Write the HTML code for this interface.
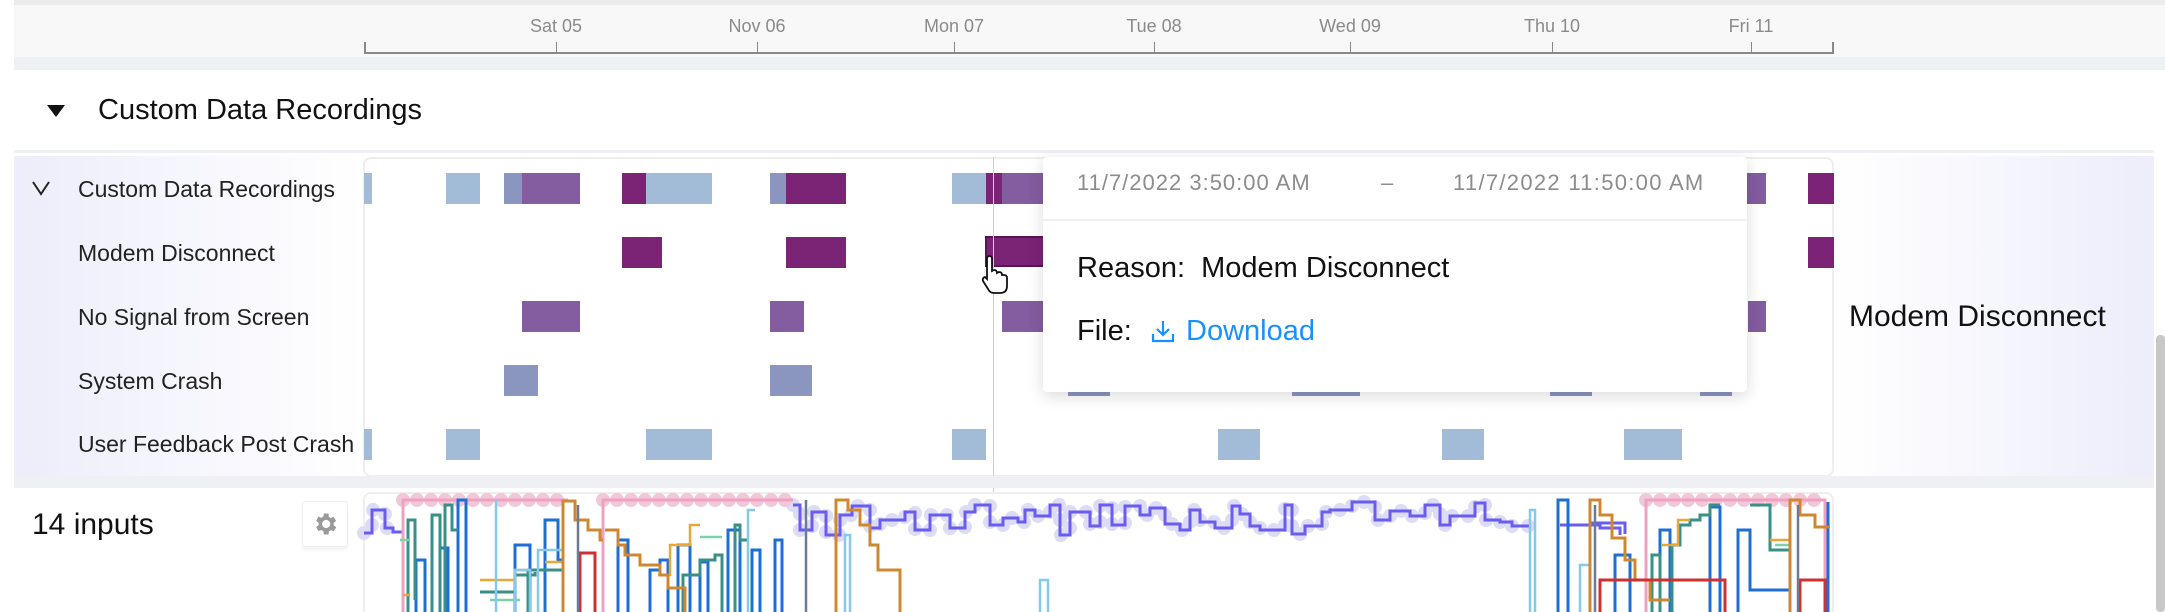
<!DOCTYPE html>
<html style="width:2165px;height:612px;overflow:hidden"><head><meta charset="utf-8"><style>
*{margin:0;padding:0;box-sizing:border-box}
body{width:2165px;height:612px;overflow:hidden;background:#fff;font-family:"Liberation Sans",sans-serif;position:relative}
.a{position:absolute}
.lab{position:absolute;left:78px;font-size:23px;color:#222;line-height:26px}
.bar{position:absolute;height:31px}
.lb{background:#a2bcd8}.gb{background:#8b96c0}.pu{background:#845ca0}.dp{background:#7b2374}
.tk{position:absolute;font-size:18px;color:#8a8a8a;transform:translateX(-50%)}
</style></head><body>
<div class="a" style="left:0;top:0;width:2165px;height:57px;background:#f8f8f8"></div>
<div class="a" style="left:14px;top:0;width:2151px;height:5px;background:#ebebeb"></div>
<div class="a" style="left:0;top:0;width:14px;height:612px;background:#fff"></div>
<div class="a" style="left:364px;top:52px;width:1470px;height:2px;background:#888"></div>
<div class="a" style="left:364px;top:42px;width:2px;height:12px;background:#888"></div>
<div class="a" style="left:1832px;top:42px;width:2px;height:12px;background:#888"></div>
<div class="a" style="left:556px;top:42px;width:1px;height:12px;background:#888"></div>
<div class="a" style="left:757px;top:42px;width:1px;height:12px;background:#888"></div>
<div class="a" style="left:954px;top:42px;width:1px;height:12px;background:#888"></div>
<div class="a" style="left:1154px;top:42px;width:1px;height:12px;background:#888"></div>
<div class="a" style="left:1350px;top:42px;width:1px;height:12px;background:#888"></div>
<div class="a" style="left:1552px;top:42px;width:1px;height:12px;background:#888"></div>
<div class="a" style="left:1751px;top:42px;width:1px;height:12px;background:#888"></div>
<div class="tk" style="left:556px;top:16px">Sat 05</div>
<div class="tk" style="left:757px;top:16px">Nov 06</div>
<div class="tk" style="left:954px;top:16px">Mon 07</div>
<div class="tk" style="left:1154px;top:16px">Tue 08</div>
<div class="tk" style="left:1350px;top:16px">Wed 09</div>
<div class="tk" style="left:1552px;top:16px">Thu 10</div>
<div class="tk" style="left:1751px;top:16px">Fri 11</div>
<div class="a" style="left:14px;top:57px;width:2151px;height:13px;background:#eff0f3"></div>
<div class="a" style="left:14px;top:70px;width:2140px;height:80px;background:#fff"></div>
<div class="a" style="left:47px;top:105px;width:0;height:0;border-left:9px solid transparent;border-right:9px solid transparent;border-top:12px solid #111"></div>
<div class="a" style="left:98px;top:94px;font-size:29px;color:#111">Custom Data Recordings</div>
<div class="a" style="left:14px;top:150px;width:2140px;height:3px;background:#eff0f3"></div>
<div class="a" style="left:14px;top:156px;width:350px;height:320px;background:linear-gradient(90deg,#ededfb,#fff)"></div>
<div class="a" style="left:1834px;top:156px;width:320px;height:320px;background:linear-gradient(90deg,#fff,#ededfb)"></div>
<div class="a" style="left:363px;top:157px;width:1471px;height:320px;border:2px solid #eeeeee;border-radius:8px;background:#fff"></div>
<svg class="a" style="left:32px;top:180px" width="18" height="16" viewBox="0 0 18 16"><path d="M1 2 L9 14 L17 2" fill="none" stroke="#222" stroke-width="2"/></svg>
<div class="lab" style="top:176px">Custom Data Recordings</div>
<div class="lab" style="top:240px">Modem Disconnect</div>
<div class="lab" style="top:304px">No Signal from Screen</div>
<div class="lab" style="top:368px">System Crash</div>
<div class="lab" style="top:431px">User Feedback Post Crash</div>
<div class="bar lb" style="top:173px;left:364px;width:8px"></div>
<div class="bar lb" style="top:173px;left:446px;width:34px"></div>
<div class="bar gb" style="top:173px;left:504px;width:18px"></div>
<div class="bar pu" style="top:173px;left:522px;width:58px"></div>
<div class="bar dp" style="top:173px;left:622px;width:24px"></div>
<div class="bar lb" style="top:173px;left:646px;width:66px"></div>
<div class="bar gb" style="top:173px;left:770px;width:16px"></div>
<div class="bar dp" style="top:173px;left:786px;width:60px"></div>
<div class="bar lb" style="top:173px;left:952px;width:34px"></div>
<div class="bar dp" style="top:173px;left:986px;width:16px"></div>
<div class="bar pu" style="top:173px;left:1002px;width:764px"></div>
<div class="bar dp" style="top:173px;left:1808px;width:26px"></div>
<div class="bar dp" style="top:237px;left:622px;width:40px"></div>
<div class="bar dp" style="top:237px;left:786px;width:60px"></div>
<div class="bar dp" style="top:236px;left:985px;width:60px;border:2px solid #5a1455"></div>
<div class="bar dp" style="top:237px;left:1808px;width:26px"></div>
<div class="bar pu" style="top:301px;left:522px;width:58px"></div>
<div class="bar pu" style="top:301px;left:770px;width:34px"></div>
<div class="bar pu" style="top:301px;left:1002px;width:50px"></div>
<div class="bar pu" style="top:301px;left:1748px;width:18px"></div>
<div class="bar gb" style="top:365px;left:504px;width:34px"></div>
<div class="bar gb" style="top:365px;left:770px;width:42px"></div>
<div class="bar gb" style="top:365px;left:1068px;width:42px"></div>
<div class="bar gb" style="top:365px;left:1292px;width:68px"></div>
<div class="bar gb" style="top:365px;left:1550px;width:42px"></div>
<div class="bar gb" style="top:365px;left:1700px;width:32px"></div>
<div class="bar lb" style="top:429px;left:364px;width:8px"></div>
<div class="bar lb" style="top:429px;left:446px;width:34px"></div>
<div class="bar lb" style="top:429px;left:646px;width:66px"></div>
<div class="bar lb" style="top:429px;left:952px;width:34px"></div>
<div class="bar lb" style="top:429px;left:1218px;width:42px"></div>
<div class="bar lb" style="top:429px;left:1442px;width:42px"></div>
<div class="bar lb" style="top:429px;left:1624px;width:58px"></div>
<div class="a" style="left:993px;top:157px;width:1px;height:455px;background:#cfcfcf"></div>
<div class="a" style="left:1849px;top:300px;font-size:30px;color:#111">Modem Disconnect</div>
<svg class="a" style="left:980px;top:255px" width="30" height="40" viewBox="0 0 30 40"><path d="M7 4 Q7 1 9.5 1 Q12 1 12 4 L12 16 L14 15 Q17 15 17 18 L19 17 Q22 17 22 20 L24 20 Q27 20 27 23 L27 31 Q27 38 20 38 L14 38 Q10 38 8 34 L3 26 Q2 23 5 22 L7 24 Z" fill="#fff" stroke="#111" stroke-width="1.8"/></svg>
<div class="a" style="left:1043px;top:157px;width:704px;height:235px;background:#fff;border-radius:4px;box-shadow:0 4px 16px rgba(0,0,0,.15)"></div>
<div class="a" style="left:1043px;top:219px;width:704px;height:2px;background:#f0f0f0"></div>
<div class="a" style="left:1077px;top:170px;font-size:22px;letter-spacing:1px;color:#8c8c8c">11/7/2022 3:50:00 AM</div>
<div class="a" style="left:1381px;top:170px;font-size:22px;color:#8c8c8c">–</div>
<div class="a" style="left:1453px;top:170px;font-size:22px;letter-spacing:1.3px;color:#8c8c8c">11/7/2022 11:50:00 AM</div>
<div class="a" style="left:1077px;top:252px;font-size:29px;color:#111">Reason:&nbsp; Modem Disconnect</div>
<div class="a" style="left:1077px;top:315px;font-size:29px;color:#111">File:</div>
<svg class="a" style="left:1150px;top:318px" width="26" height="26" viewBox="0 0 26 26"><path d="M13 3 V17 M7 11 L13 17 L19 11 M3 16 V23 H23 V16" fill="none" stroke="#1890ff" stroke-width="2.2"/></svg>
<div class="a" style="left:1186px;top:315px;font-size:29px;color:#1890ff">Download</div>
<div class="a" style="left:2154px;top:70px;width:11px;height:542px;background:#fff"></div>
<div class="a" style="left:2156px;top:335px;width:9px;height:277px;background:#c8c8c8;border-radius:4px"></div>
<div class="a" style="left:14px;top:476px;width:2140px;height:12px;background:#eff0f3"></div>
<div class="a" style="left:32px;top:508px;font-size:30px;color:#111">14 inputs</div>
<div class="a" style="left:302px;top:501px;width:46px;height:46px;border:1px solid #eee;border-radius:3px;background:#fff;box-shadow:0 3px 3px rgba(0,0,0,.05)"></div>
<svg class="a" style="left:311px;top:510px" width="28" height="28" viewBox="0 0 24 24"><path fill="#9a9a9a" d="M19.4 13a7.5 7.5 0 0 0 0-2l2.1-1.6-2-3.5-2.5 1a7 7 0 0 0-1.7-1L15 3h-4l-.4 2.7a7 7 0 0 0-1.7 1l-2.5-1-2 3.5L6.6 11a7.5 7.5 0 0 0 0 2l-2.2 1.6 2 3.5 2.5-1a7 7 0 0 0 1.7 1L11 21h4l.4-2.7a7 7 0 0 0 1.7-1l2.5 1 2-3.5zM13 15.5a3.5 3.5 0 1 1 0-7 3.5 3.5 0 0 1 0 7z"/></svg>
<div class="a" style="left:363px;top:492px;width:1471px;height:120px;border:2px solid #eeeeee;border-bottom:none;border-radius:8px 8px 0 0;background:#fff"></div>
<svg class="a" style="left:0;top:0" width="2165" height="612" fill="none" stroke-width="3">
<g stroke="#dcdcf5" stroke-width="14" stroke-linecap="round" stroke-dasharray="0 16">
<path d="M364 533 H372 V510 H385 V528 H400"/>
<path d="M793 505 H800 V530 H812 V512 H826 V535 H840 V515 H852 V506 H870 V528 H880 V520 H905 V512 H915 V530 H930 V515 H950 V528 H965 V512 H975 V505 H990 V525 H1003 V518 H1018 V522 H1025 V510 H1035 V516 H1050 V505 H1060 V535 H1070 V512 H1090 V526 H1100 V505 H1112 V525 H1125 V506 H1140 V515 H1150 V508 H1165 V524 H1180 V530 H1190 V510 H1200 V522 H1215 V528 H1232 V506 H1240 V514 H1250 V526 H1260 V530 H1285 V505 H1292 V534 H1305 V526 H1322 V512 H1330 V510 H1352 V502 H1375 V520 H1390 V511 H1410 V516 H1425 V505 H1440 V525 H1450 V516 H1475 V503 H1485 V520 H1500 V522 H1512 V526 H1530"/>
</g>
<g stroke="#f0c8d8" stroke-width="14" stroke-linecap="round" stroke-dasharray="0 14">
<path d="M403 500 H568 M603 500 H793 M1646 500 H1825"/>
</g>
<path stroke="#6a5cf0" d="M364 533 H372 V510 H385 V528 H393 V532 H402 M793 505 H800 V530 H812 V512 H826 V535 H840 V515 H852 V506 H870 V528 H880 V520 H905 V512 H915 V530 H930 V515 H950 V528 H965 V512 H975 V505 H990 V525 H1003 V518 H1018 V522 H1025 V510 H1035 V516 H1050 V505 H1060 V535 H1070 V512 H1090 V526 H1100 V505 H1112 V525 H1125 V506 H1140 V515 H1150 V508 H1165 V524 H1180 V530 H1190 V510 H1200 V522 H1215 V528 H1232 V506 H1240 V514 H1250 V526 H1260 V530 H1285 V505 H1292 V534 H1305 V526 H1322 V512 H1330 V510 H1352 V502 H1375 V520 H1390 V511 H1410 V516 H1425 V505 H1440 V525 H1450 V516 H1475 V503 H1485 V520 H1500 V522 H1512 V526 H1530 M1560 525 H1600 V528 H1620 V535 M1590 523 H1625 V534"/>
<path stroke="#f0a0c0" d="M403 612 V500 H568 M603 612 V500 H793 M1646 612 V500 H1825 V612"/>
<g stroke="#1e6fd4">
<path d="M416 612 V560 H425 V612 M440 612 V548 H448 V612 M458 612 V500 H466 V612 M515 612 V545 H530 V612 M545 612 V520 H558 V560 H563 V612 M618 612 V540 H628 V612 M650 612 V570 H660 V560 H668 V612 M678 612 V545 H690 V612 M700 612 V562 H708 V612 M728 612 V530 H740 V612 M752 612 V550 H760 V612 M775 612 V540 H782 V612 M1558 612 V500 H1568 V612 M1615 612 V555 H1630 V612 M1660 612 V530 H1670 V612 M1710 612 V507 H1720 V612 M1738 612 V530 H1750 V590 H1790 V612 M1828 612 V502 V612"/>
</g>
<g stroke="#3a9088">
<path d="M408 612 V520 H415 V600 M432 612 V515 H440 V612 M445 612 V505 H452 V530 H458 M480 592 H515 V575 H535 V572 M528 612 V570 H563 M683 612 V575 H700 V560 H715 V555 H722 V612 M735 612 V525 H740 V540 H748 M1652 612 V555 H1660 V612 M1672 612 V545 H1680 V525 H1690 V520 H1700 V515 H1710 V505 H1720 M1750 505 H1770 V550 H1790"/>
</g>
<g stroke="#e8a838" stroke-width="2.5">
<path d="M403 595 H410 M480 580 H515 V570 H530 M545 562 H563 M658 575 H670 V545 H690 V525 H700 M1662 545 H1678 V520 H1690 M1770 540 H1790"/>
</g>
<g stroke="#7ed0a8" stroke-width="2.5">
<path d="M400 540 H410 M490 600 H520 M700 537 H722 M1775 545 H1790"/>
</g>
<g stroke="#88c8ec" stroke-width="2.5">
<path d="M496 612 V500 M515 612 V570 H530 V612 M538 612 V550 H563 V612 M748 612 V510 H755 M845 612 V535 H850 V612 M1040 612 V580 H1048 V612 M1530 612 V510 H1535 V612 M1580 612 V565 H1590 V612"/>
</g>
<g stroke="#d08830">
<path d="M563 612 V501 H575 V520 H588 V530 H600 V540 H603 M605 530 H618 V545 H625 V555 H640 V565 H660 V575 H668 V588 H685 V612 M836 612 V500 H848 V510 H860 V525 H870 V545 H878 V570 H900 V612 M1590 612 V500 H1600 V515 H1612 V538 H1625 V560 H1635 V580 H1650 V600 H1670 M1790 612 V500 H1800 V515 H1815 V527 H1830"/>
</g>
<g stroke="#d03030">
<path d="M580 612 V553 H595 V612 M1600 612 V580 H1725 V612 M1800 612 V580 H1825 V612"/>
</g>
<g stroke="#6c7a98" stroke-width="2.5">
<path d="M578 612 V505 M806 612 V500 M1595 612 V505 M1798 612 V505"/>
</g>
</svg>
</body></html>
